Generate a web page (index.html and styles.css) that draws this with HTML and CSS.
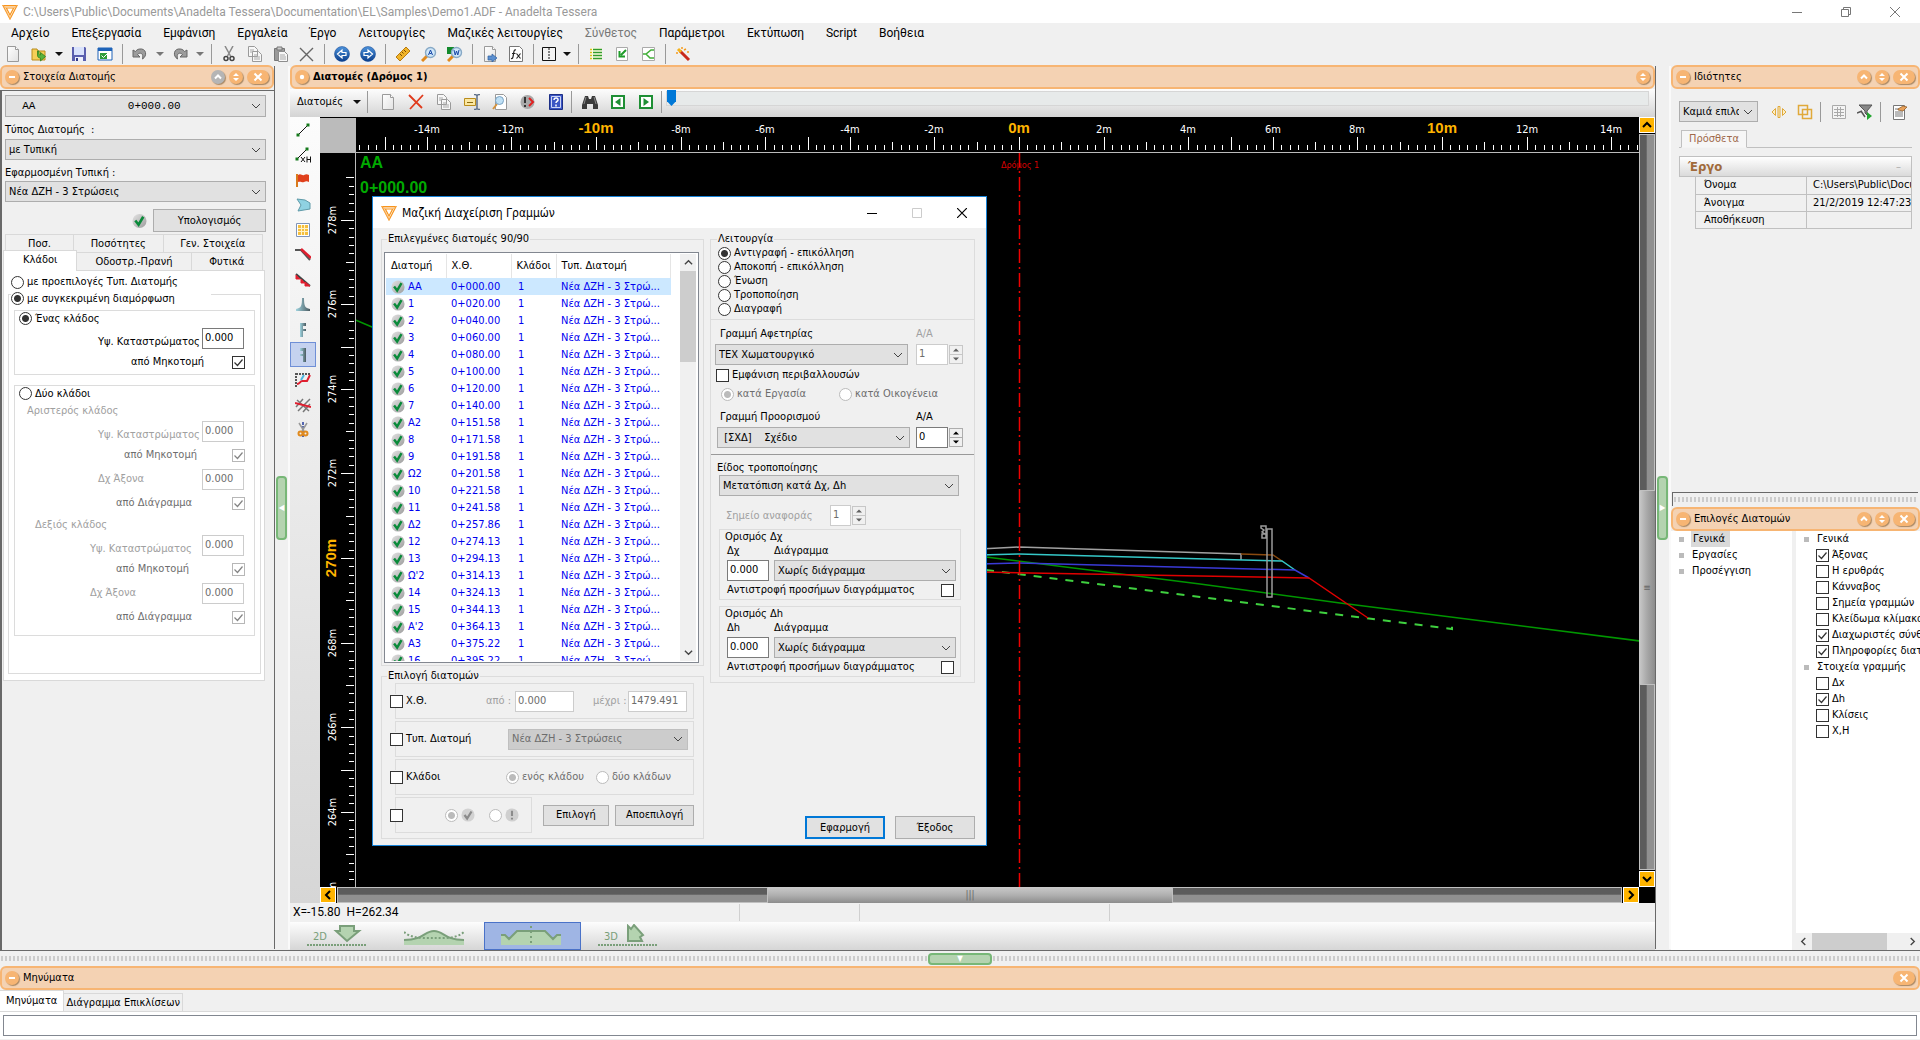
FILE: index.html
```html
<!DOCTYPE html>
<html lang="el">
<head>
<meta charset="utf-8">
<title>Anadelta Tessera</title>
<link rel="stylesheet" href="styles.css">
</head>
<body>
<svg class="defs" aria-hidden="true">
  <defs>
    <linearGradient id="gBall" x1="0" y1="0" x2="1" y2="1"><stop offset="0" stop-color="#e4e4e4"/><stop offset="1" stop-color="#9c9c9c"/></linearGradient>
    <linearGradient id="gBlue" x1="0" y1="0" x2="0" y2="1"><stop offset="0" stop-color="#4d93dc"/><stop offset="1" stop-color="#0b3f8c"/></linearGradient>
    <linearGradient id="gTeal" x1="0" y1="0" x2="1" y2="0"><stop offset="0" stop-color="#9fd3de"/><stop offset="1" stop-color="#4b5a60"/></linearGradient>
    <linearGradient id="gPaper" x1="0" y1="0" x2="1" y2="1"><stop offset="0" stop-color="#fff"/><stop offset="1" stop-color="#e2e2e2"/></linearGradient>
  </defs>
  <symbol id="logo" viewBox="0 0 16 16"><path d="M1 1.500h14L8 15z M4.300 4h7.400L8 11z" fill="none" stroke="#f7941d" stroke-width="1.200"/><path d="M1 1.500l3.300 2.500M15 1.500L11.700 4M8 11v4M2.500 2.700h11M3 4.500l4 8" fill="none" stroke="#f9b566" stroke-width=".8"/></symbol>
  <symbol id="ok" viewBox="0 0 16 16"><circle cx="8" cy="8" r="7.500" fill="url(#gBall)"/><path d="M3.500 7.500l3.500 4.500 5-8.500" fill="none" stroke="#0a8a3a" stroke-width="2.800"/></symbol>
  <symbol id="okGrey" viewBox="0 0 16 16"><circle cx="8" cy="8" r="7.500" fill="#d2d2d2"/><path d="M4 8l3 4 5-8" fill="none" stroke="#8b8b8b" stroke-width="2.600"/></symbol>
  <symbol id="bangGrey" viewBox="0 0 16 16"><circle cx="8" cy="8" r="7.500" fill="#cfcfcf"/><path d="M8 3v6M8 11v2" stroke="#8b8b8b" stroke-width="2.400"/></symbol>
  <symbol id="doc" viewBox="0 0 16 16"><path d="M2.500.500h8l3 3v12h-11z" fill="url(#gPaper)" stroke="#9a9a9a"/><path d="M10.500.500v3h3" fill="#fff" stroke="#9a9a9a"/></symbol>
  <symbol id="copy" viewBox="0 0 16 16"><path d="M1.500.500h6l3 3v7h-9z M5.500 5.500h6l3 3v7h-9z" fill="#f7f7f7" stroke="#9a9a9a"/><path d="M3 4h4M3 6h3M7 9h4M7 11h6M7 13h6" stroke="#a9a9a9"/></symbol>
  <symbol id="lens" viewBox="0 0 16 16"><path d="M6 10l-5 5" stroke="#e08a1e" stroke-width="3"/><circle cx="9.500" cy="6.500" r="5" fill="#cfe6f8" stroke="#87a9c6" stroke-width="1.400"/></symbol>
  <symbol id="cUp" viewBox="0 0 10 10"><path d="M2 6.500l3-3 3 3" fill="none" stroke="#fff" stroke-width="2"/></symbol>
  <symbol id="cBoth" viewBox="0 0 10 10"><path d="M2 4l3-3 3 3z M2 6l3 3 3-3z" fill="#fff"/></symbol>
  <symbol id="cX" viewBox="0 0 10 10"><path d="M1.500 1.500l7 7M8.500 1.500l-7 7" stroke="#fff" stroke-width="2"/></symbol>
  <symbol id="cMinus" viewBox="0 0 10 10"><path d="M2 5h6" stroke="#fff" stroke-width="2"/></symbol>
  <symbol id="cDot" viewBox="0 0 10 10"><circle cx="5" cy="5" r="2.200" fill="#fff"/></symbol>
</svg>

<header class="titlebar">
  <svg class="i16"><use href="#logo"/></svg>
  <span class="titletext">C:\Users\Public\Documents\Anadelta Tessera\Documentation\EL\Samples\Demo1.ADF - Anadelta Tessera</span>
  <div class="winbtns">
    <button aria-label="Ελαχιστοποίηση"><svg viewBox="0 0 10 10"><path d="M0 5.500h10" stroke="#777"/></svg></button>
    <button aria-label="Επαναφορά"><svg viewBox="0 0 10 10"><path d="M.500 2.500h7v7h-7z M2.500 2.500v-2h7v7h-2" fill="none" stroke="#777"/></svg></button>
    <button aria-label="Κλείσιμο"><svg viewBox="0 0 10 10"><path d="M0 0l10 10M10 0L0 10" stroke="#777"/></svg></button>
  </div>
</header>

<nav class="menubar">
  <button>Αρχείο</button><button>Επεξεργασία</button><button>Εμφάνιση</button><button>Εργαλεία</button><button>Έργο</button><button>Λειτουργίες</button><button>Μαζικές λειτουργίες</button><button disabled>Σύνθετος</button><button>Παράμετροι</button><button>Εκτύπωση</button><button>Script</button><button>Βοήθεια</button>
</nav>

<div class="toolbar">
  <button aria-label="Νέο"><svg class="i16"><use href="#doc"/></svg></button>
  <button aria-label="Άνοιγμα"><svg viewBox="0 0 16 16"><path d="M1 3h5l1 2h7v9H1z" fill="#f5cf57" stroke="#b98c1c"/><path d="M6.500 5v4c0 2 1 3 3 3v3l5-4.500-5-4v2.500c-1 0-1.500-.5-1.500-1.500V5z" fill="#59b33b" stroke="#2f7d1c" stroke-width=".8"/></svg></button>
  <button class="caret" aria-label="Πρόσφατα"><i></i></button>
  <button aria-label="Αποθήκευση"><svg viewBox="0 0 16 16"><path d="M1 1h13l1 1v13H1z" fill="#5a5fae"/><path d="M3 1h10v8H3z" fill="#d9e2fb"/><path d="M4 11h8v4H4z" fill="#eef0fb"/><path d="M5 12h2v3H5z" fill="#333c8a"/></svg></button>
  <button aria-label="Παράθυρο"><svg viewBox="0 0 16 16"><path d="M1 2h14v12H1z" fill="#fff" stroke="#1e63b8"/><path d="M1 2h14v3H1z" fill="#1e63b8"/><path d="M3 7h7v6H3z" fill="#2f9c3b"/><path d="M4.500 9.500l2 2 4-4" fill="none" stroke="#fff"/></svg></button>
  <span class="sep"></span>
  <button aria-label="Αναίρεση"><svg viewBox="0 0 16 16"><path d="M1 4v7h7L5.500 8.500C8 6 12 7 10.500 13c5-3 4-11-3-10-2 .3-3 1.200-4 2.500z" fill="#9c9c9c" stroke="#666"/></svg></button>
  <button class="caret off" aria-label="Λίστα αναίρεσης"><i></i></button>
  <button aria-label="Επανάληψη"><svg viewBox="0 0 16 16"><path d="M15 4v7H8l2.500-2.500C8 6 4 7 5.500 13c-5-3-4-11 3-10 2 .3 3 1.200 4 2.500z" fill="#9c9c9c" stroke="#666"/></svg></button>
  <button class="caret off" aria-label="Λίστα επανάληψης"><i></i></button>
  <span class="sep"></span>
  <button aria-label="Αποκοπή"><svg viewBox="0 0 16 16"><path d="M4 0l5.500 10M12 0L6.500 10" stroke="#888" stroke-width="1.500"/><circle cx="5" cy="12.500" r="2" fill="none" stroke="#444" stroke-width="1.500"/><circle cx="11" cy="12.500" r="2" fill="none" stroke="#444" stroke-width="1.500"/></svg></button>
  <button aria-label="Αντιγραφή"><svg class="i16"><use href="#copy"/></svg></button>
  <button aria-label="Επικόλληση"><svg viewBox="0 0 16 16"><path d="M1.500 2.500h10v12h-10z" fill="#9a9a9a" stroke="#777"/><path d="M4 1h5v3H4z" fill="#ccc" stroke="#777"/><path d="M5.500 5.500h6l3 3v7h-9z" fill="#f7f7f7" stroke="#8d8d8d"/><path d="M7 9h5M7 11h6M7 13h6" stroke="#a9a9a9"/></svg></button>
  <button aria-label="Διαγραφή"><svg viewBox="0 0 16 16"><path d="M1 2l13 13M14 2L1 15" stroke="#666" stroke-width="1.400"/></svg></button>
  <span class="sep"></span>
  <button aria-label="Προηγούμενο"><svg viewBox="0 0 16 16"><circle cx="8" cy="8" r="7.500" fill="url(#gBlue)" stroke="#0b3f8c" stroke-width=".5"/><path d="M3.500 8L8 4v2.500h4v3H8V12z" fill="none" stroke="#fff" stroke-width="1.200"/></svg></button>
  <button aria-label="Επόμενο"><svg viewBox="0 0 16 16"><circle cx="8" cy="8" r="7.500" fill="url(#gBlue)" stroke="#0b3f8c" stroke-width=".5"/><path d="M12.500 8L8 4v2.500H4v3h4V12z" fill="none" stroke="#fff" stroke-width="1.200"/></svg></button>
  <span class="sep"></span>
  <button aria-label="Μέτρηση"><svg viewBox="0 0 16 16"><path d="M1 11L11 1l4 4L5 15z" fill="#f0b429" stroke="#b87a10"/><path d="M5 8l2 2M7 6l1.500 1.500M9 4l2 2" stroke="#7a4b00"/></svg></button>
  <button aria-label="Εύρεση Α"><svg viewBox="0 0 16 16"><use href="#lens"/><path d="M7.500 9l2-5 2 5M8.500 7.500h2" fill="none" stroke="#1647a8"/></svg></button>
  <button aria-label="Εύρεση W"><svg viewBox="0 0 16 16"><path d="M0 1h7v7H0z" fill="#128a2c"/><use href="#lens"/><path d="M7 4l1.200 5L9.500 5l1.300 4L12 4" fill="none" stroke="#1647a8"/></svg></button>
  <span class="sep"></span>
  <button aria-label="Εξαγωγή"><svg viewBox="0 0 16 16"><use href="#doc"/><path d="M6 10h4V8l5 4-5 4v-2H6z" fill="#5b8fd0" stroke="#2f5f9e" stroke-width=".7"/></svg></button>
  <button aria-label="Συνάρτηση"><svg viewBox="0 0 16 16"><path d="M1.500.500h10l3 3v12h-13z" fill="#fff" stroke="#777"/><path d="M8 4c-2-.5-2 1-2.500 4S5 13 3 12.500M4 7.500h3.500M8.500 7.500l4 5M12.500 7.500l-4 5" fill="none" stroke="#222" stroke-width="1.200"/></svg></button>
  <span class="sep"></span>
  <button class="narrow" aria-label="Διαχωρισμός"><svg viewBox="0 0 16 16"><path d="M1.500 1.500h13v13h-13z" fill="#f3f3f3" stroke="#111"/><path d="M8 2v12" stroke="#111" stroke-dasharray="2 1"/></svg></button>
  <button class="caret" aria-label="Διατάξεις"><i></i></button>
  <span class="sep"></span>
  <button aria-label="Λίστα"><svg viewBox="0 0 16 16"><path d="M3 2h11v12H3z" fill="#fffce0"/><path d="M5 3.500h9M5 6.500h9M5 9.500h9M5 12.500h9" stroke="#2f9c2f" stroke-width="1.500"/><path d="M2 3.500h2M2 6.500h2M2 9.500h2M2 12.500h2" stroke="#d7c21b" stroke-width="1.500"/></svg></button>
  <button aria-label="Εισαγωγή"><svg viewBox="0 0 16 16"><path d="M2.500 1.500h11v13h-11z" fill="#fff" stroke="#aaa"/><path d="M12 4L7 9M5.500 5v5.500h5.500" fill="none" stroke="#1f9c2a" stroke-width="2"/></svg></button>
  <button aria-label="Τομή"><svg viewBox="0 0 16 16"><path d="M2.500 1.500h12v13h-12z" fill="#fff" stroke="#aaa"/><path d="M3 8h3l5-4h3M6 8l4 4h4" fill="none" stroke="#3fae36" stroke-width="1.600"/></svg></button>
  <span class="sep"></span>
  <button aria-label="Οδηγός"><svg viewBox="0 0 16 16"><path d="M5 5l9 9" stroke="#c8291c" stroke-width="3"/><path d="M3 3l3 3" stroke="#f4b21c" stroke-width="3"/><path d="M7 1v2M11 3l-2 1M1 7h2M12 6h2" stroke="#f59a1c" stroke-width="1.500"/></svg></button>
</div>

<div class="workspace">
  <aside class="panel left">
    <div class="phead"><button aria-label="Σύμπτυξη"><svg><use href="#cMinus"/></svg></button><h2>Στοιχεία Διατομής</h2><button class="grey" aria-label="Πάνω"><svg><use href="#cUp"/></svg></button><button aria-label="Αλλαγή μεγέθους"><svg><use href="#cBoth"/></svg></button><button class="wide" aria-label="Κλείσιμο"><svg><use href="#cX"/></svg></button></div>
    <div class="leftbody">
      <select class="mono" aria-label="Διατομή"><option>&nbsp;&nbsp;AA&nbsp;&nbsp;&nbsp;&nbsp;&nbsp;&nbsp;&nbsp;&nbsp;&nbsp;&nbsp;&nbsp;&nbsp;&nbsp;&nbsp;0+000.00</option></select>
      <label for="typ" class="lb1">Τύπος Διατομής &nbsp;:</label>
      <select id="typ"><option>με Τυπική</option></select>
      <label for="tmpl" class="lb2">Εφαρμοσμένη Τυπική :</label>
      <select id="tmpl"><option>Νέα ΔΖΗ - 3 Στρώσεις</option></select>
      <div class="calc"><svg class="i16"><use href="#ok"/></svg><button class="btn">Υπολογισμός</button></div>
      <div class="tabs">
        <div class="tabrow back"><button>Ποσ.</button><button>Ποσότητες</button><button>Γεν. Στοιχεία</button></div>
        <div class="tabrow front"><button class="on">Κλάδοι</button><button>Οδοστρ.-Πρανή</button><button>Φυτικά</button></div>
      </div>
      <div class="pane">
        <label class="opt p1"><input type="radio" name="cfg">με προεπιλογές Τυπ. Διατομής</label>
        <div class="box outer">
          <label class="opt cut c2"><input type="radio" name="cfg" checked>με συγκεκριμένη διαμόρφωση</label>
          <div class="box inner one">
            <label class="opt cut"><input type="radio" name="br" checked>Ένας κλάδος</label>
            <div class="frow low"><label for="y0" class="m84">Υψ. Καταστρώματος</label><input id="y0" type="text" value="0.000"></div>
            <div class="frow"><label for="k0" class="m117">από Μηκοτομή</label><input id="k0" type="checkbox" checked></div>
          </div>
          <div class="box inner two">
            <label class="opt cut"><input type="radio" name="br">Δύο κλάδοι</label>
            <div class="sub m12">Αριστερός κλάδος</div>
            <div class="frow low"><label for="y1" class="m84 dis">Υψ. Καταστρώματος</label><input id="y1" type="text" value="0.000" disabled></div>
            <div class="frow"><label for="k1" class="m110 semi">από Μηκοτομή</label><input id="k1" type="checkbox" checked disabled></div>
            <div class="frow"><label for="y2" class="m84 dis">Δχ Άξονα</label><input id="y2" type="text" value="0.000" disabled></div>
            <div class="frow"><label for="k2" class="m102 semi">από Διάγραμμα</label><input id="k2" type="checkbox" checked disabled></div>
            <div class="sub m20">Δεξιός κλάδος</div>
            <div class="frow low"><label for="y3" class="m76 dis">Υψ. Καταστρώματος</label><input id="y3" type="text" value="0.000" disabled></div>
            <div class="frow"><label for="k3" class="m102 semi">από Μηκοτομή</label><input id="k3" type="checkbox" checked disabled></div>
            <div class="frow"><label for="y4" class="m76 dis">Δχ Άξονα</label><input id="y4" type="text" value="0.000" disabled></div>
            <div class="frow"><label for="k4" class="m102 semi">από Διάγραμμα</label><input id="k4" type="checkbox" checked disabled></div>
          </div>
        </div>
      </div>
    </div>
  </aside>

  <div class="vsplit"><span class="grip g1">◀</span></div>

  <main class="panel center">
    <div class="phead"><button aria-label="Ενεργό"><svg><use href="#cDot"/></svg></button><h1>Διατομές (Δρόμος 1)</h1><button aria-label="Αλλαγή μεγέθους"><svg><use href="#cBoth"/></svg></button></div>
    <div class="toolbar2">
      <button class="txt">Διατομές <i></i></button>
      <span class="sep"></span>
      <button aria-label="Νέα"><svg class="i16"><use href="#doc"/></svg></button>
      <button aria-label="Διαγραφή"><svg viewBox="0 0 16 16"><path d="M1 1l13 13M15 1L2 15" stroke="#e03a1c" stroke-width="1.800"/></svg></button>
      <button aria-label="Αντιγραφή"><svg class="i16"><use href="#copy"/></svg></button>
      <button aria-label="Μετονομασία"><svg viewBox="0 0 16 16"><path d="M.500 4.500h11v7H.500z" fill="#fbe7a1" stroke="#b98c1c"/><path d="M3 8.500h6" stroke="#8a6a10"/><path d="M10 .500h1.500l1.500 1 1.500-1H16M13 1v14M10 15.500h1.500l1.500-1 1.500 1H16" fill="none" stroke="#5d6f88" stroke-width="1.500"/></svg></button>
      <button aria-label="Προεπισκόπηση"><svg viewBox="0 0 16 16"><path d="M3.500.500h8l3 3v12h-11z" fill="#fff" stroke="#999"/><path d="M5 10l-4 5" stroke="#d6923b" stroke-width="2"/><circle cx="7.500" cy="6.500" r="4" fill="#bfe0f5" stroke="#7aa3c4"/></svg></button>
      <button aria-label="Έλεγχος"><svg viewBox="0 0 16 16"><circle cx="7.500" cy="8" r="7" fill="#a9a9a9"/><path d="M5 3v6M5 11v2" stroke="#333" stroke-width="2"/><path d="M9 4l4 4-4 4" fill="none" stroke="#e01f1f" stroke-width="2"/></svg></button>
      <button aria-label="Βοήθεια"><svg viewBox="0 0 16 16"><path d="M1.500.500h13v15h-13z" fill="#3b56c4" stroke="#1d2f86"/><path d="M3.500 2.500h9v11h-9z" fill="none" stroke="#cdd5f5"/><path d="M6 6c0-3 4.500-2.500 4 0-.3 1.500-2 1.500-2 3M8 10.500v2" fill="none" stroke="#fff" stroke-width="1.500"/></svg></button>
      <span class="sep"></span>
      <button aria-label="Εύρεση"><svg viewBox="0 0 16 16"><path d="M3 2h3l1 3h2l1-3h3l3 9v4h-5v-5H5v5H0v-4z" fill="#3a3a3a"/><path d="M4 3L2 10M12 3l2 7" stroke="#888"/></svg></button>
      <button aria-label="Προηγούμενη"><svg viewBox="0 0 16 16"><path d="M2 2h12v12H2z" fill="#fff" stroke="#1f8f35" stroke-width="2"/><path d="M10.500 4v8L5 8z" fill="#1f8f35"/></svg></button>
      <button aria-label="Επόμενη"><svg viewBox="0 0 16 16"><path d="M2 2h12v12H2z" fill="#fff" stroke="#1f8f35" stroke-width="2"/><path d="M5.500 4v8L11 8z" fill="#1f8f35"/></svg></button>
      <span class="sep"></span>
      <input type="range" min="0" max="89" value="0" aria-label="Θέση διατομής">
    </div>
    <div class="stage">
      <div class="tools">
        <button aria-label="Γραμμή"><svg viewBox="0 0 16 16"><path d="M3 13L13 3" stroke="#111"/><path d="M1.500 11.500h3v3h-3z M11.500 1.500h3v3h-3z" fill="#157a1c"/></svg></button>
        <button aria-label="Γραμμή ΧΗ"><svg viewBox="0 0 16 16"><path d="M2 12L12 2" stroke="#111"/><path d="M.500 10.500h3v3h-3z M10.500.500h3v3h-3z" fill="#157a1c"/><path d="M6 10l4 5M10 10l-4 5M12 9.500v6M15.500 9.500v6M12 12.500h4" stroke="#111"/></svg></button>
        <button aria-label="Σημαία"><svg viewBox="0 0 16 16"><path d="M2 2v13" stroke="#d97a1c" stroke-width="2"/><path d="M3 3c3-2 4 1 6 0s3-1 5 0v7c-2-1-3-1-5 0s-3-1-6 0z" fill="#e0401c"/></svg></button>
        <button aria-label="Περιοχή"><svg viewBox="0 0 16 16"><path d="M2 2l8 1 5 3v6l-12 2 3-6z" fill="#8fd2e2" stroke="#5f9aa8"/></svg></button>
        <button aria-label="Κάνναβος"><svg viewBox="0 0 16 16"><path d="M1.500 1.500h13v13h-13z" fill="#fff" stroke="#8095b8"/><path d="M3 3h10v10H3z" fill="#f6bf3d"/><path d="M6.500 3v10M9.500 3v10M3 6.500h10M3 9.500h10" stroke="#fff3c9"/></svg></button>
        <button aria-label="Παράλληλη"><svg viewBox="0 0 16 16"><path d="M0 3h6l9 10" fill="none" stroke="#555" stroke-width="2"/><path d="M6 2l10 9" stroke="#e01f2f" stroke-width="2.500"/></svg></button>
        <button aria-label="Βαθμίδες"><svg viewBox="0 0 16 16"><path d="M1 2l14 12" stroke="#444" stroke-width="2"/><path d="M1 3v4h4zM6 7v4h4zM10 10v4h5z" fill="#e01f2f" stroke="#e01f2f"/></svg></button>
        <button aria-label="Πρανές"><svg viewBox="0 0 16 16"><path d="M7 1h2c0 8 1 10 6 11v2H1v-2c5-1 6-3 6-11z" fill="url(#gTeal)"/></svg></button>
        <button aria-label="Στοιχείο F"><svg viewBox="0 0 16 16"><path d="M5 1h6v3H8v3h3v2H8v6H5z" fill="url(#gTeal)"/></svg></button>
        <button class="on" aria-label="Στοιχείο καθρέφτη"><svg viewBox="0 0 16 16"><path d="M11 1H5v3h3v3H5v2h3v6h3z" fill="url(#gTeal)"/></svg></button>
        <button aria-label="Γέμισμα"><svg viewBox="0 0 16 16"><path d="M1 1v14M1 2h14" stroke="#555" stroke-dasharray="2 1" stroke-width="2"/><path d="M2 12c3 0 3-3 5-3h5l3-6" fill="none" stroke="#e01f2f" stroke-width="2"/><path d="M6 8l3-5" stroke="#4ab6e0" stroke-width="2"/></svg></button>
        <button aria-label="Διαγράμμιση"><svg viewBox="0 0 16 16"><path d="M1 10l7-8M3 14L15 2M8 15l7-8M2 3l12 11" stroke="#777" stroke-width="1.500"/><path d="M0 6l16 4" stroke="#e01f2f" stroke-width="2"/></svg></button>
        <button aria-label="Κοπή"><svg viewBox="0 0 16 16"><path d="M8 0v16" stroke="#223a9c" stroke-dasharray="3 1" stroke-width="1.500"/><path d="M4 1l5 8M12 1l-5 8" stroke="#999" stroke-width="1.500"/><circle cx="5.500" cy="11.500" r="2" fill="none" stroke="#e08a1e" stroke-width="2"/><circle cx="10.500" cy="11.500" r="2" fill="none" stroke="#e08a1e" stroke-width="2"/></svg></button>
      </div>
      <div class="draw">
        <svg class="canvas" id="canvas">
          <rect width="100%" height="100%" fill="#000"/>
          <g fill="none" stroke-width="1.500">
            <path d="M0 188L52 210L400 380L666 440L880 467L1020 486L1320 524" stroke="#009600"/>
            <path d="M666 453L880 480L1132 512V506" stroke="#3fd03f" stroke-width="2" stroke-dasharray="8 8"/>
            <path d="M660 432L699 430L921 437V443" stroke="#a0a0a0"/>
            <path d="M921 437L953 438L962 444" stroke="#8a4a10"/>
            <path d="M660 438L699 437L962 444L975 453" stroke="#35c8c8"/>
            <path d="M660 447L699 446L975 453L989 461" stroke="#3a3ad6"/>
            <path d="M660 455L880 459L989 461L1048 501" stroke="#e00000"/>
            <path d="M947 412h5v68h-5z M946 409v12h-4v-4h3l-3-2 2-2-3-2v-2z" stroke="#9a9a9a"/>
            <path d="M699.500 36V770" stroke="#f00000" stroke-dasharray="14 4 2 4"/>
            <path d="M695 26l10 10M705 26l-10 10" stroke="#c00000" stroke-dasharray="3 2"/>
          </g>
          <text x="700" y="51" class="axis">Δρόμος 1</text>
          <text x="40" y="51" class="sect">AA</text>
          <text x="40" y="76" class="sect">0+000.00</text>
          <g id="rulers"></g>
          <rect y="1" width="36" height="34" fill="#bbb"/>
        </svg>
        <div class="vbar"><button class="arr" aria-label="Πάνω"><svg viewBox="0 0 10 10"><path d="M1 7l4-4 4 4" /></svg></button><span class="trk a"></span><span class="thumb">≡</span><span class="trk b"></span><button class="arr" aria-label="Κάτω"><svg viewBox="0 0 10 10"><path d="M1 3l4 4 4-4"/></svg></button></div>
        <div class="hbar"><button class="arr" aria-label="Αριστερά"><svg viewBox="0 0 10 10"><path d="M7 1L3 5l4 4"/></svg></button><span class="trk a"></span><span class="thumb">|||</span><span class="trk b"></span><button class="arr" aria-label="Δεξιά"><svg viewBox="0 0 10 10"><path d="M3 1l4 4-4 4"/></svg></button></div>
        <span class="corner"></span>
      </div>
    </div>
    <div class="status"><span class="st1">X=-15.80 &nbsp;H=262.34</span><span class="st2"></span><span class="st3"></span></div>
    <div class="views">
      <button aria-label="Κάτοψη 2D"><svg viewBox="0 0 60 24"><text x="6" y="16">2D</text><path d="M33 2h14v5h5L40 17 29 7h4z" fill="#b4d3b0" stroke="#7a9f7a" stroke-width="2"/><path d="M0 21h60" stroke="#7a9f7a" stroke-width="2" stroke-dasharray="2 1"/></svg></button>
      <button aria-label="Μηκοτομή"><svg viewBox="0 0 60 24"><path d="M0 16C20 16 20 7 30 7S40 16 60 16V21H0z" fill="#b4d3b0"/><path d="M0 16C20 16 20 7 30 7S40 16 60 16" fill="none" stroke="#7a9f7a" stroke-width="2"/><path d="M0 8C8 15 20 14 30 14S52 15 60 8" fill="none" stroke="#7a9f7a" stroke-width="2" stroke-dasharray="2 2"/></svg></button>
      <button class="on" aria-label="Διατομές"><svg viewBox="0 0 60 24"><path d="M0 11h4l4 4 8-8h28l8 8 4-4h4v10H0z" fill="#b4d3b0"/><path d="M0 11h4l4 4 8-8h28l8 8 4-4h4" fill="none" stroke="#7a9f7a" stroke-width="2"/><path d="M30 2v19" stroke="#7a9f7a" stroke-width="2" stroke-dasharray="2 3"/></svg></button>
      <button aria-label="Προβολή 3D"><svg viewBox="0 0 60 24"><text x="6" y="16">3D</text><path d="M30 2l3 3 3-4 9 10-3 2 2 4H30z" fill="#b4d3b0" stroke="#7a9f7a" stroke-width="2"/><path d="M0 21h60" stroke="#7a9f7a" stroke-width="2" stroke-dasharray="2 1"/></svg></button>
    </div>
  </main>

  <div class="vsplit"><span class="grip g1">▶</span></div>

  <aside class="right">
    <section class="props">
      <div class="phead"><button aria-label="Σύμπτυξη"><svg><use href="#cMinus"/></svg></button><h2>Ιδιότητες</h2><button aria-label="Πάνω"><svg><use href="#cUp"/></svg></button><button aria-label="Αλλαγή μεγέθους"><svg><use href="#cBoth"/></svg></button><button class="wide" aria-label="Κλείσιμο"><svg><use href="#cX"/></svg></button></div>
      <div class="proptools">
        <select aria-label="Επιλογή"><option>Καμιά επιλογή</option></select>
        <button aria-label="Καθρέφτης"><svg viewBox="0 0 16 16"><path d="M4.500 4.500L1 8l3.500 3.500zM11.500 4.500L15 8l-3.500 3.500zM7 2.500h2v11H7z" fill="#fbefc8" stroke="#e0a93a"/></svg></button>
        <button aria-label="Ομαδοποίηση"><svg viewBox="0 0 16 16"><path d="M1.500 1.500h9v9h-9zM5.500 5.500h9v9h-9z" fill="none" stroke="#e0a93a" stroke-width="1.500"/></svg></button>
        <span class="sep"></span>
        <button aria-label="Πίνακας"><svg viewBox="0 0 16 16"><path d="M1.500 1.500h13v13h-13z" fill="#f4f4f4" stroke="#aaa"/><path d="M3 5.500h10M3 8.500h10M3 11.500h10M6.500 3v10M9.500 3v10" stroke="#a9a9a9"/></svg></button>
        <button aria-label="Φίλτρο"><svg viewBox="0 0 16 16"><path d="M2 1h13l-5 6v4L8 9V7z" fill="#888" stroke="#555"/><path d="M0 9l5-2M4 7l4 6" stroke="#555" stroke-width="1.500"/><path d="M10 8v8l5-4z" fill="#22a52f"/></svg></button>
        <span class="sep"></span>
        <button aria-label="Επεξεργασία"><svg viewBox="0 0 16 16"><path d="M2.500 1.500h11v14h-11z" fill="#fff" stroke="#777"/><path d="M4 5h4M4 8h8M4 10h8M4 12h8" stroke="#777"/><path d="M7 5l5-3 4 1-4 4-5-1z" fill="#e8a15a" stroke="#8a5420" stroke-width=".7"/></svg></button>
      </div>
      <div class="ptabs"><button>Πρόσθετα</button></div>
      <div class="cat"><strong>Έργο</strong><span>–</span></div>
      <table class="ptable">
        <tbody>
          <tr><th scope="row">Όνομα</th><td>C:\Users\Public\Documents</td></tr>
          <tr><th scope="row">Άνοιγμα</th><td>21/2/2019 12:47:23</td></tr>
          <tr><th scope="row">Αποθήκευση</th><td></td></tr>
        </tbody>
      </table>
    </section>
    <div class="hsplit thin"></div>
    <section class="opts">
      <div class="phead"><button aria-label="Σύμπτυξη"><svg><use href="#cMinus"/></svg></button><h2>Επιλογές Διατομών</h2><button aria-label="Πάνω"><svg><use href="#cUp"/></svg></button><button aria-label="Αλλαγή μεγέθους"><svg><use href="#cBoth"/></svg></button><button class="wide" aria-label="Κλείσιμο"><svg><use href="#cX"/></svg></button></div>
      <div class="lists">
        <ul class="tree t1"><li><b></b><span class="sel">Γενικά</span></li><li><b></b>Εργασίες</li><li><b></b>Προσέγγιση</li></ul>
        <div class="t2wrap">
          <ul class="tree t2">
            <li><b></b>Γενικά</li>
            <li class="k"><label><input type="checkbox" checked>Άξονας</label></li>
            <li class="k"><label><input type="checkbox">Η ερυθράς</label></li>
            <li class="k"><label><input type="checkbox">Κάνναβος</label></li>
            <li class="k"><label><input type="checkbox">Σημεία γραμμών</label></li>
            <li class="k"><label><input type="checkbox">Κλείδωμα κλίμακας</label></li>
            <li class="k"><label><input type="checkbox" checked>Διαχωριστές σύνθετης</label></li>
            <li class="k"><label><input type="checkbox" checked>Πληροφορίες διατομής</label></li>
            <li><b></b>Στοιχεία γραμμής</li>
            <li class="k"><label><input type="checkbox">Δx</label></li>
            <li class="k"><label><input type="checkbox" checked>Δh</label></li>
            <li class="k"><label><input type="checkbox">Κλίσεις</label></li>
            <li class="k"><label><input type="checkbox">Χ,Η</label></li>
          </ul>
          <div class="minibar"><svg viewBox="0 0 10 10"><path d="M7 1L3 5l4 4"/></svg><span></span><svg viewBox="0 0 10 10"><path d="M3 1l4 4-4 4"/></svg></div>
        </div>
      </div>
    </section>
  </aside>
</div>

<div class="hsplit"><span class="grip g2">▼</span></div>

<footer class="messages">
  <div class="phead"><button aria-label="Σύμπτυξη"><svg><use href="#cMinus"/></svg></button><h2>Μηνύματα</h2><button class="wide" aria-label="Κλείσιμο"><svg><use href="#cX"/></svg></button></div>
  <div class="mtabs"><button class="on">Μηνύματα</button><button>Διάγραμμα Επικλίσεων</button></div>
  <div class="mbody"><input type="text" aria-label="Μήνυμα"></div>
</footer>

<div class="dialog" role="dialog" aria-labelledby="dlgTitle">
  <div class="dtitle"><svg class="i16"><use href="#logo"/></svg><h2 id="dlgTitle">Μαζική Διαχείριση Γραμμών</h2>
    <button aria-label="Ελαχιστοποίηση"><svg viewBox="0 0 10 10"><path d="M0 5.500h10" stroke="#000"/></svg></button>
    <button aria-label="Μεγιστοποίηση" disabled><svg viewBox="0 0 10 10"><path d="M.500.500h9v9h-9z" fill="none" stroke="#ccc"/></svg></button>
    <button aria-label="Κλείσιμο"><svg viewBox="0 0 10 10"><path d="M0 0l10 10M10 0L0 10" stroke="#000" stroke-width="1.200"/></svg></button>
  </div>
  <div class="dbody">
    <div class="dleft">
      <fieldset class="f1"><legend>Επιλεγμένες διατομές 90/90</legend>
        <div class="listbox">
          <div class="scroller">
            <table class="rows"><thead><tr><th>Διατομή</th><th>Χ.Θ.</th><th>Κλάδοι</th><th>Τυπ. Διατομή</th></tr></thead><tbody id="rows"></tbody></table>
          </div>
          <div class="lbar"><svg viewBox="0 0 10 10"><path d="M1 7l4-4 4 4"/></svg><span></span><svg viewBox="0 0 10 10"><path d="M1 3l4 4 4-4"/></svg></div>
        </div>
      </fieldset>
      <fieldset class="f2"><legend>Επιλογή διατομών</legend>
        <div class="pick"><label class="opt"><input type="checkbox">Χ.Θ.</label><label for="from" class="dis fa">από :</label><input id="from" type="text" class="w59" value="0.000" disabled><label for="to" class="dis fb">μέχρι :</label><input id="to" type="text" class="w59" value="1479.491" disabled></div>
        <div class="pick"><label class="opt"><input type="checkbox">Τυπ. Διατομή</label><select class="w180" disabled aria-label="Τυπική διατομή"><option>Νέα ΔΖΗ - 3 Στρώσεις</option></select></div>
        <div class="pick"><label class="opt"><input type="checkbox">Κλάδοι</label><label class="opt semi ra"><input type="radio" name="nb" checked disabled>ενός κλάδου</label><label class="opt semi rb"><input type="radio" name="nb" disabled>δύο κλάδων</label></div>
        <div class="lastrow">
          <div class="pick short"><input type="checkbox" aria-label="Κατάσταση"><label class="opt rc"><input type="radio" name="st" checked disabled><svg class="i14"><use href="#okGrey"/></svg></label><label class="opt rd"><input type="radio" name="st" disabled><svg class="i14"><use href="#bangGrey"/></svg></label></div>
          <button class="btn w67">Επιλογή</button><button class="btn w79">Αποεπιλογή</button>
        </div>
      </fieldset>
    </div>
    <div class="dright">
      <fieldset class="f3"><legend>Λειτουργία</legend>
        <div class="radios">
          <label class="opt"><input type="radio" name="op" checked>Αντιγραφή - επικόλληση</label>
          <label class="opt"><input type="radio" name="op">Αποκοπή - επικόλληση</label>
          <label class="opt"><input type="radio" name="op">Ένωση</label>
          <label class="opt"><input type="radio" name="op">Τροποποίηση</label>
          <label class="opt"><input type="radio" name="op">Διαγραφή</label>
        </div>
        <hr>
        <div class="lrow"><label for="src">Γραμμή Αφετηρίας</label><label for="n1" class="dis">Α/Α</label></div>
        <div class="srow"><select id="src" class="w193"><option>ΤΕΧ Χωματουργικό</option></select><span class="spin"><input id="n1" type="text" value="1" disabled><i class="ud off"></i></span></div>
        <label class="opt envelope"><input type="checkbox">Εμφάνιση περιβαλλουσών</label>
        <div class="by"><label class="opt semi"><input type="radio" name="by" checked disabled>κατά Εργασία</label><label class="opt semi"><input type="radio" name="by" disabled>κατά Οικογένεια</label></div>
        <div class="lrow"><label for="dst">Γραμμή Προορισμού</label><label for="n2">Α/Α</label></div>
        <div class="srow target"><select id="dst" class="w193"><option>&nbsp;[ΣΧΔ] &nbsp; &nbsp;Σχέδιο</option></select><span class="spin"><input id="n2" type="text" value="0"><i class="ud"></i></span></div>
        <hr class="dark">
        <label for="kind" class="klabel">Είδος τροποποίησης</label>
        <select id="kind" class="w240"><option>Μετατόπιση κατά Δχ, Δh</option></select>
        <div class="refrow"><label for="ref" class="dis">Σημείο αναφοράς</label><span class="spin sm"><input id="ref" type="text" value="1" disabled><i class="ud off"></i></span></div>
        <div class="def">
          <div>Ορισμός Δχ</div>
          <div class="dl"><label for="dx">Δχ</label><label for="dxd">Διάγραμμα</label></div>
          <div class="dl"><input id="dx" type="text" value="0.000"><select id="dxd"><option>Χωρίς διάγραμμα</option></select></div>
          <div class="inv"><label for="ix">Αντιστροφή προσήμων διαγράμματος</label><input id="ix" type="checkbox"></div>
        </div>
        <div class="def">
          <div>Ορισμός Δh</div>
          <div class="dl"><label for="dh">Δh</label><label for="dhd">Διάγραμμα</label></div>
          <div class="dl"><input id="dh" type="text" value="0.000"><select id="dhd"><option>Χωρίς διάγραμμα</option></select></div>
          <div class="inv"><label for="ih">Αντιστροφή προσήμων διαγράμματος</label><input id="ih" type="checkbox"></div>
        </div>
      </fieldset>
      <div class="dbtns"><button class="btn primary">Εφαρμογή</button><button class="btn">Έξοδος</button></div>
    </div>
  </div>
</div>
<script src="app.js"></script>
</body>
</html>
```
FILE: styles.css
```css
* { box-sizing: border-box; }
html, body { height: 100%; }
body {
  margin: 0; display: flex; flex-direction: column; overflow: hidden; position: relative;
  background: #f0f0f0; color: #000;
  font: 11px/14px "DejaVu Sans Condensed", "DejaVu Sans", sans-serif;
}
button, input, select { font: inherit; color: inherit; margin: 0; }
button { border: 0; background: none; padding: 0; display: inline-flex; align-items: center; justify-content: center; white-space: nowrap; }
h1, h2 { margin: 0; font-size: 11px; font-weight: normal; flex: 1; white-space: nowrap; }
h1 { font-weight: bold; }
ul { list-style: none; margin: 0; padding: 0; }
label { white-space: nowrap; }
.defs { width: 0; height: 0; position: absolute; }
.i16, .toolbar svg, .toolbar2 svg, .tools svg, .proptools svg { width: 16px; height: 16px; flex: none; }
.i14 { width: 14px; height: 14px; }
.dis { color: #a0a0a0; }
.semi { color: #6d6d6d; }

/* form controls */
input[type=text] { height: 21px; width: 42px; border: 1px solid #7a7a7a; background: #fff; padding: 0 2px 2px; border-radius: 0; }
input[type=text]:disabled { border-color: #ccc; color: #6d6d6d; }
input[type=checkbox], input[type=radio] { appearance: none; width: 13px; height: 13px; flex: none; border: 1px solid #333; background: #fff center/11px no-repeat; }
input[type=radio] { border-radius: 50%; }
input[type=checkbox]:checked { background-image: url("data:image/svg+xml,%3Csvg xmlns='http://www.w3.org/2000/svg' viewBox='0 0 11 11'%3E%3Cpath d='M1.500 5.500l3 3 5-6' fill='none' stroke='%23333' stroke-width='1.200'/%3E%3C/svg%3E"); }
input[type=radio]:checked { background-image: radial-gradient(circle, #333 3px, transparent 4px); }
input[type=checkbox]:disabled, input[type=radio]:disabled { border-color: #bbb; }
input[type=checkbox]:disabled:checked { opacity: .6; border-color: #888; }
input[type=radio]:disabled:checked { background-image: radial-gradient(circle, #bbb 3px, transparent 4px); }
select {
  appearance: none; height: 21px; border: 1px solid #adadad; border-radius: 0; padding: 0 18px 0 3px; text-overflow: clip; opacity: 1;
  background: #e1e1e1 url("data:image/svg+xml,%3Csvg xmlns='http://www.w3.org/2000/svg' viewBox='0 0 10 6'%3E%3Cpath d='M1 1l4 4 4-4' fill='none' stroke='%23444'/%3E%3C/svg%3E") right 4px center/10px 6px no-repeat;
}
select:disabled { background-color: #ccc; color: #6d6d6d; border-color: #bfbfbf; }
.btn { background: #e1e1e1; border: 1px solid #adadad; height: 21px; }
.btn.primary { border: 2px solid #0078d7; }
.opt { display: flex; align-items: center; gap: 3px; }

/* title, menu, toolbar */
.titlebar { height: 23px; background: #fff; display: flex; align-items: center; padding-left: 2px; gap: 5px; flex: none; }
.titletext { flex: 1; font: 12px/16px Roboto, sans-serif; color: #999; white-space: nowrap; }
.winbtns { margin-right: 2px; }
.winbtns button { width: 46px; height: 20px; }
.winbtns svg { width: 10px; height: 10px; }
.menubar { height: 20px; display: flex; gap: 22px; padding: 0 11px; flex: none; font: 12px/20px Roboto, sans-serif; }
.menubar button:disabled { color: #777; }
.toolbar { height: 22px; display: flex; align-items: center; flex: none; }
.toolbar button { width: 26px; height: 20px; }
.toolbar .narrow { width: 22px; }
.toolbar .caret { width: 14px; }
.caret i, .txt i { border: 4px solid transparent; border-top-color: #111; border-bottom: 0; }
.caret.off i { border-top-color: #777; }
.sep { width: 1px; height: 20px; background: #999; margin: 0 4px; flex: none; }

.workspace { flex: 1; min-height: 0; display: flex; }
.phead { height: 24px; flex: none; background: #f4d2b3; border: 2px solid #f7b573; border-radius: 6px; display: flex; align-items: center; gap: 4px; padding: 0 3px; }
.phead button { width: 14px; height: 14px; border-radius: 8px; background: #f7b573; box-shadow: 1px 1px 1px #a88763; }
.phead .grey { background: #b5b5b5; }
.phead .wide { width: 22px; }
.phead svg { width: 10px; height: 10px; }
.panel, .right, .props, .opts { display: flex; flex-direction: column; min-width: 0; }

/* left panel */
.left { width: 274px; flex: none; }
.leftbody { flex: 1; border: solid #696969; border-width: 1px 0 0 2px; margin-top: 1px; padding: 4px 7px 0 3px; display: flex; flex-direction: column; }
.leftbody select { width: 261px; flex: none; }
.leftbody .mono { height: 22px; font-family: "Liberation Mono", monospace; }
.lb1 { padding: 6px 0 2px; }
.lb2 { padding: 6px 0 1px; }
.calc { display: flex; justify-content: flex-end; align-items: center; gap: 6px; padding: 7px 0 2px; width: 261px; }
.calc .btn { width: 113px; height: 23px; }
.calc .i16 { width: 15px; }
.tabs { width: 258px; }
.tabrow { display: flex; }
.tabrow button { border: 1px solid #d9d9d9; border-width: 1px 1px 0 0; height: 18px; }
.tabrow button:first-child { border-left-width: 1px; }
.back button { flex: 68; } .back button + button { flex: 90; } .back button + button + button { flex: 100; }
.front button { flex: 73; } .front button + button { flex: 114; } .front button + button + button { flex: 71; }
.front .on { background: #fff; margin: -2px 0 -1px -2px; height: 21px; z-index: 1; padding-bottom: 3px; }
.pane { width: 262px; margin-left: -2px; background: #fff; border: 1px solid #d9d9d9; padding: 4px 3px 6px 4px; }
.p1 { padding: 0 0 0 3px; }
.box { border: 1px solid #dcdcdc; }
.outer { margin-top: 5px; padding: 0 5px 37px; }
.cut { background: #fff; width: 118px; height: 15px; }
.c2 { width: 200px; margin: -4px 0 0 3px; }
.inner { padding: 0 10px 0 9px; }
.inner .cut { margin-left: -5px; }
.outer > .c2 { margin-left: -3px; }
.one { margin-top: 4px; height: 65px; }
.two { margin-top: 10px; height: 251px; }
.frow { display: flex; align-items: center; justify-content: space-between; height: 24px; }
.frow input[type=checkbox] { margin-right: -1px; }
.frow.low label { padding-top: 8px; }
.m84 { margin-left: 74px; } .m117 { margin-left: 107px; } .m110 { margin-left: 100px; } .m102 { margin-left: 92px; } .m76 { margin-left: 66px; }
.sub { color: #a0a0a0; height: 18px; padding-top: 3px; }
.sub.m12 { margin-left: 3px; } .sub.m20 { margin-left: 11px; }

/* splitters */
.vsplit { width: 16px; flex: none; border-left: 1px solid #696969; border-right: 2px solid #fafafa; margin: 1px 0; display: flex; align-items: center; justify-content: center; background: radial-gradient(#ccc 1px, transparent 1px) center top/13px 4px repeat-y; }
.grip { background: #b4d3b0; border: 2px solid #77b777; border-radius: 4px; color: #fff; font-size: 8px; line-height: 8px; display: flex; align-items: center; justify-content: center; }
.g1 { width: 11px; height: 64px; }
.g2 { width: 64px; height: 12px; }
.hsplit { height: 16px; flex: none; border-top: 1px solid #696969; display: flex; justify-content: center; align-items: center; background: radial-gradient(#ccc 1px, transparent 1px) left center/4px 13px repeat-x; }
.hsplit.thin { height: 14px; border-left: 1px solid #696969; margin: 0 2px 1px 1px; }

/* centre */
.center { flex: 1; }
.toolbar2 { height: 28px; flex: none; display: flex; align-items: center; padding: 0 0 2px 2px; background: linear-gradient(#fdfdfd, #d4d4d4); }
.toolbar2 button { width: 28px; height: 22px; }
.toolbar2 .txt { width: 74px; gap: 10px; }
.toolbar2 .sep { margin: 0 4px 0 1px; height: 22px; }
.toolbar2 .sep:nth-of-type(1) { margin-right: 6px; }
input[type=range] { appearance: none; flex: 1; height: 15px; margin: 0 6px 8px 0; background: #e7eaea; border: 1px solid #d6d6d6; }
input[type=range]::-webkit-slider-thumb { appearance: none; width: 9px; height: 16px; background: #0078d7; clip-path: polygon(0 0, 100% 0, 100% 70%, 50% 100%, 0 70%); }
.stage { flex: 1; display: flex; min-height: 0; }
.tools { width: 30px; flex: none; background: linear-gradient(#fcfcfc, #d6d6d6); display: flex; flex-direction: column; }
.tools button { width: 26px; height: 25px; }
.tools .on { background: #c5d2ef; border: 1px solid #6f8fd6; }
.draw { flex: 1; display: grid; grid-template-columns: 1fr 16px; grid-template-rows: 1fr 16px; min-width: 0; background: #000; }
.canvas { width: 100%; height: 100%; min-height: 0; display: block; }
.axis { fill: #d80000; font-size: 9px; text-anchor: middle; }
.sect { fill: #00aa00; font: bold 16px "Liberation Sans", sans-serif; }
.tick { fill: #fff; font-size: 11px; text-anchor: middle; }
.tick.major { fill: #ffb400; font: bold 15px "Liberation Sans", sans-serif; }
.vbar, .hbar { display: flex; background: #000; }
.vbar { flex-direction: column; }
.arr { width: 16px; height: 16px; background: #ffb400; border: 1px solid #fff; flex: none; }
.arr svg { width: 10px; height: 10px; fill: none; stroke: #000; stroke-width: 2; }
.trk { border: 1px solid #c0c0c0; }
.thumb { display: flex; align-items: center; justify-content: center; color: #666; font-size: 10px; line-height: 10px; }
.vbar .trk { background: linear-gradient(90deg, #5c5c5c 45%, #909090 50%); }
.vbar .thumb { background: linear-gradient(90deg, #cacaca, #a8a8a8 50%, #8c8c8c); flex: 194; }
.vbar .a { flex: 357; margin-top: 1px; } .vbar .b { flex: 185; margin-bottom: 1px; }
.hbar .trk { background: linear-gradient(#5c5c5c 45%, #909090 50%); }
.hbar .thumb { background: linear-gradient(#cacaca, #b0b0b0 50%, #8c8c8c); flex: 405; }
.hbar .a { flex: 430; margin-left: 1px; } .hbar .b { flex: 449; margin-right: 1px; }
.status { height: 19px; flex: none; display: flex; align-items: center; font: 12px/17px Roboto, sans-serif; }
.status span { border-right: 1px solid #d0d0d0; height: 17px; padding-left: 3px; }
.st1 { width: 450px; } .st2 { width: 120px; } .st3 { width: 250px; }
.views { height: 28px; flex: none; display: flex; background: linear-gradient(#fdfdfd, #d6d6d6); }
.views button { width: 97px; height: 28px; padding: 0 3px 1px 0; }
.views .on { background: #9fb5e4; border: 1px solid #4a72c8; }
.views svg { width: 60px; height: 24px; }
.views text { font: 11px "DejaVu Sans Condensed", sans-serif; fill: #7a9f7a; }

/* right */
.right { width: 249px; flex: none; overflow: hidden; }
.props { height: 427px; flex: none; overflow: hidden; }
.proptools { display: flex; align-items: center; padding: 8px 0 0 8px; height: 37px; flex: none; }
.proptools select { width: 79px; height: 21px; margin-right: 8px; }
.proptools button { width: 26px; height: 22px; }
.proptools .sep { margin: 0 5px 0 2px; }
.ptabs { margin: 4px 8px 0; padding-left: 2px; border-bottom: 1px solid #c0c0c0; height: 18px; display: flex; flex: none; }
.ptabs button { width: 66px; height: 18px; border: 1px solid #c0c0c0; border-bottom-color: #f4f4f4; color: #a0694a; background: #f6f6f6; }
.cat { margin: 8px 8px 0; height: 21px; flex: none; display: flex; align-items: center; justify-content: space-between; border: 1px solid #c0c0c0; padding: 0 10px 0 8px; background: linear-gradient(#fff, #dadada); color: #aaa; }
.cat strong { color: #a06a3a; font-size: 13px; }
.ptable { margin: 0 8px 0 24px; border-collapse: collapse; table-layout: fixed; width: 217px; }
.ptable th, .ptable td { border: 1px solid #c0c0c0; border-top: 0; height: 17px; padding: 0 0 0 8px; text-align: left; font-weight: normal; white-space: nowrap; overflow: hidden; line-height: 14px; }
.ptable td { padding-left: 6px; }
.ptable th { width: 111px; }
.opts { flex: 1; min-height: 0; }
.lists { flex: 1; display: flex; min-height: 0; }
.t1 { width: 121px; }
.tree { background: #fff; }
.tree li { height: 16px; display: flex; align-items: center; padding-left: 8px; gap: 8px; white-space: nowrap; }
.tree b { width: 5px; height: 5px; background: #bbb; }
.sel { background: #d9d9d9; padding: 1px 5px 1px 2px; margin-left: -1px; }
.tree li.k { padding-left: 20px; }
.tree label { display: flex; align-items: center; gap: 3px; }
.t2wrap { flex: 1; margin-left: 4px; display: flex; flex-direction: column; min-width: 0; overflow: hidden; background: #fff; }
.t2 { flex: 1; }
.minibar { height: 17px; background: #f0f0f0; display: flex; align-items: center; gap: 4px; padding: 0 3px; }
.minibar svg, .lbar svg { width: 9px; height: 9px; fill: none; stroke: #444; stroke-width: 1.500; flex: none; }
.minibar span { width: 75px; height: 17px; background: #cdcdcd; }
.minibar span + svg { margin-left: auto; }

/* messages */
.messages { flex: none; }
.mtabs { height: 21px; display: flex; align-items: flex-start; }
.mtabs button { padding: 0 2px; height: 18px; border: solid #d9d9d9; border-width: 1px 1px 0 0; margin-top: 3px; }
.mtabs .on { background: #fff; padding: 0 6px; height: 21px; margin-top: 0; }
.mbody { background: #fff; padding: 3px; height: 28px; margin-bottom: 1px; border-top: 1px solid #d9d9d9; }
.mbody input[type=text] { width: 100%; height: 21px; border: 1px solid #828790; display: block; }

/* dialog floating over the drawing */
.dialog { position: absolute; left: 372px; top: 196px; width: 615px; border: 1px solid #1883d7; background: #f0f0f0; }
.dtitle { height: 31px; background: #fff; display: flex; align-items: center; padding: 0 4px 0 8px; gap: 5px; }
.dtitle h2 { font-size: 12px; }
.dtitle button { width: 40px; height: 28px; }
.dtitle svg:not(.i16) { width: 10px; height: 10px; }
.dbody { display: flex; gap: 6px; padding: 4px 11px 6px 8px; }
fieldset { border: 1px solid #dcdcdc; margin: 0; padding: 0; min-width: 0; }
legend { padding: 0 1px; margin-left: 6px; line-height: 14px; }
.dleft { width: 323px; flex: none; }
.f1 { padding: 6px 4px 2px 2px; }
.f1 legend { margin-left: 3px; }
.listbox { height: 411px; border: 1px solid #828790; background: #fff; display: flex; padding: 1px; }
.scroller { flex: 1; overflow: hidden; }
.rows { border-collapse: collapse; table-layout: fixed; width: 285px; color: #0000f0; }
.rows th { color: #000; font-weight: normal; text-align: left; height: 24px; padding: 0 0 0 5px; border-right: 1px solid #e5e5e5; white-space: nowrap; }
.rows th:nth-child(1) { width: 60px; } .rows th:nth-child(2) { width: 65px; } .rows th:nth-child(3) { width: 45px; }
.rows td { height: 17px; line-height: 17px; padding: 0 0 0 5px; white-space: nowrap; }
.rows td:nth-child(3) { padding-left: 7px; }
.rows td span { display: flex; align-items: center; gap: 3px; }
.rows td svg { width: 14px; height: 14px; }
.rows .cur { background: #cce8ff; }
.lbar { width: 16px; margin-right: 1px; background: #f0f0f0; display: flex; flex-direction: column; align-items: center; padding: 4px 0; gap: 4px; }
.lbar span { width: 16px; height: 91px; background: #cdcdcd; }
.lbar span + svg { margin-top: auto; }
.f2 { margin-top: 3px; padding: 0 9px 5px 13px; }
.f2 legend { margin-left: -8px; }
.pick { border: 1px solid #dcdcdc; height: 36px; margin-bottom: 2px; display: flex; align-items: center; }
.pick > :first-child { margin-left: -6px; background-color: #f0f0f0; }
.pick > input:first-child { background-color: #fff; }
.pick .opt:first-child { width: 92px; flex: none; }
.fa { margin-left: 4px; width: 29px; } .fb { margin-left: 19px; width: 35px; }
.pick .w59 { width: 59px; }
.w180 { width: 180px; margin-left: 26px; }
.ra { margin-left: 24px; } .rb { margin-left: 12px; }
.lastrow { display: flex; align-items: center; }
.short { width: 137px; margin: 0 11px 0 0; }
.rc { margin-left: 42px; } .rd { margin-left: 14px; }
.w67 { width: 67px; } .w79 { width: 79px; margin-left: 6px; }
.dright { flex: 1; display: flex; flex-direction: column; justify-content: space-between; }
.f3 { padding-bottom: 5px; }
.radios { padding: 0 7px; }
.radios .opt { height: 14px; }
hr { border: 0; border-top: 1px solid #dcdcdc; margin: 3px 0 0; }
hr.dark { border-top-color: #999; margin-top: 6px; }
.lrow { height: 24px; padding: 7px 0 0 9px; display: flex; }
.lrow label:first-child { width: 196px; }
.srow { display: flex; gap: 8px; padding-left: 4px; }
.srow.target { padding-left: 6px; gap: 6px; }
.w193 { width: 193px; }
.spin { display: flex; gap: 1px; }
.spin input[type=text] { width: 32px; }
.spin.sm input[type=text] { width: 21px; }
.ud { width: 14px; height: 19px; border: 1px solid #adadad; background: #f0f0f0 url("data:image/svg+xml,%3Csvg xmlns='http://www.w3.org/2000/svg' viewBox='0 0 12 17'%3E%3Cpath d='M3 5.500l3-3 3 3zM3 11.500l3 3 3-3z' fill='%23000'/%3E%3Cpath d='M0 8.500h12' stroke='%23adadad'/%3E%3C/svg%3E") center/12px 17px no-repeat; margin-top: 1px; }
.ud.off { opacity: .6; }
.envelope { height: 20px; padding-left: 5px; }
.by { height: 18px; display: flex; gap: 33px; padding-left: 10px; }
.klabel { display: block; padding: 6px 0 0 6px; height: 20px; }
.w240 { width: 240px; margin-left: 8px; display: block; }
.refrow { display: flex; align-items: center; padding: 9px 0 3px 15px; }
.refrow label { width: 104px; }
.def { border: 1px solid #dcdcdc; margin: 0 13px 6px 8px; padding: 0 5px 2px; height: 71px; }
.def + .def { margin-bottom: 0; }
.dl { display: grid; grid-template-columns: 42px 1fr; gap: 5px; padding-left: 2px; }
.dl + .dl { margin-top: 2px; }
.dl select { margin-right: -1px; }
.inv { display: flex; justify-content: space-between; align-items: center; padding: 2px 1px 0 2px; }
.dbtns { display: flex; justify-content: flex-end; gap: 10px; }
.dbtns .btn { width: 80px; height: 23px; }
```
FILE: app.js
```js
const stations = [
  ["AA", "0+000.00"], ["1", "0+020.00"], ["2", "0+040.00"], ["3", "0+060.00"], ["4", "0+080.00"],
  ["5", "0+100.00"], ["6", "0+120.00"], ["7", "0+140.00"], ["Α2", "0+151.58"], ["8", "0+171.58"],
  ["9", "0+191.58"], ["Ω2", "0+201.58"], ["10", "0+221.58"], ["11", "0+241.58"], ["Δ2", "0+257.86"],
  ["12", "0+274.13"], ["13", "0+294.13"], ["Ω'2", "0+314.13"], ["14", "0+324.13"], ["15", "0+344.13"],
  ["Α'2", "0+364.13"], ["Α3", "0+375.22"], ["16", "0+395.22"]
];
document.getElementById("rows").innerHTML = stations.map(([name, km], i) =>
  `<tr${i ? "" : ' class="cur"'}><td><span><svg><use href="#ok"/></svg>${name}</span></td><td>${km}</td><td>1</td><td>Νέα ΔΖΗ - 3 Στρώ...</td></tr>`
).join("");

// Rulers: one metre is SCALE pixels, with five divisions to the metre.
const SCALE = 42.3, ZERO_X = 699, LEVEL_270 = 441;
const len = k => k % 5 ? 5 : ((k / 5) % 2 && (k / 5) % 5 ? 8 : 13);
let ticks = "", labels = "";
for (let k = -80; k <= 75; k++) {
  const x = Math.round(ZERO_X + k * SCALE / 5);
  if (x < 36) continue;
  ticks += `M${x}.500 ${33 - len(k)}V33`;
  const m = k / 5;
  if (m % 2 === 0) labels += `<text class="tick${m % 10 ? "" : " major"}" x="${x}" y="16">${m}m</text>`;
}
for (let k = -40; k <= 45; k++) {
  const y = Math.round(LEVEL_270 - k * SCALE / 5);
  if (y < 37) continue;
  ticks += `M${34 - len(k)} ${y}.500H34`;
  const m = 270 + k / 5;
  if (m % 2 === 0) labels += `<text class="tick${m % 10 ? "" : " major"}" transform="translate(16 ${y}) rotate(-90)">${m}m</text>`;
}
document.getElementById("rulers").innerHTML =
  `<path d="M0 0H3000V35H0zM0 35H35V2000H0z" fill="#000"/>` +
  `<path d="M0 35.500H3000M35.500 35V2000" stroke="#bbb"/>` +
  `<path d="${ticks}" stroke="#fff"/>${labels}`;
```
